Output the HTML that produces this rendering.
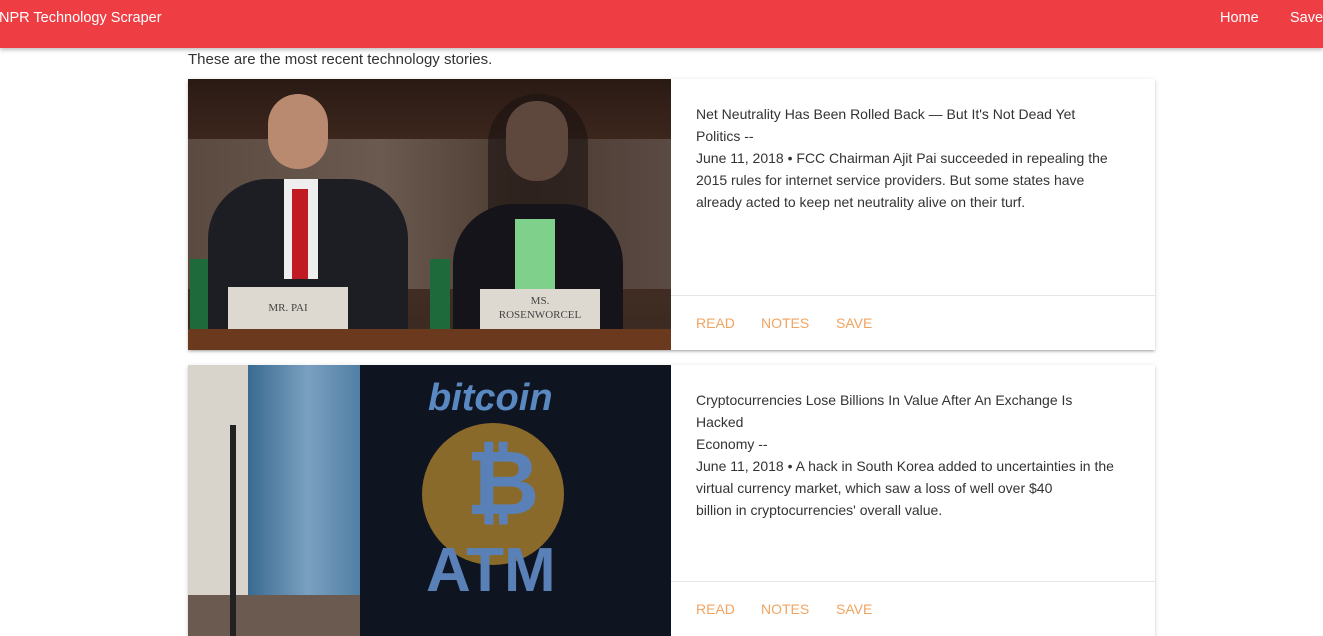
<!DOCTYPE html>
<html><head><style>
*{margin:0;padding:0;box-sizing:border-box}
body{width:1323px;height:596px;overflow:hidden;background:#fff;font-family:"Liberation Sans",sans-serif;color:rgba(0,0,0,.87);position:relative}
nav{position:absolute;left:0;top:0;width:1323px;height:48px;background:#ee3e43;box-shadow:0 2px 4px rgba(0,0,0,.25);color:#fff;font-size:14.5px}
nav .b{position:absolute;left:-1px;top:10px}
nav .h{position:absolute;left:1220px;top:10px}
nav .s{position:absolute;left:1290px;top:10px}
.intro{position:absolute;left:188px;top:51px;font-size:15px;color:#333}
.card{position:absolute;left:188px;width:967px;height:271px;background:#fff;box-shadow:0 2px 2px rgba(0,0,0,.14),0 1px 5px rgba(0,0,0,.12),0 3px 1px -2px rgba(0,0,0,.1)}
.img{position:absolute;left:0;top:0;width:483px;height:271px;overflow:hidden}
.txt{position:absolute;left:508px;top:24px;width:424px;font-size:14px;line-height:22px;color:#333}
.act{position:absolute;left:483px;top:216px;width:484px;height:55px;border-top:1px solid #e6e6e6}
.act span{position:absolute;top:19px;font-size:14px;color:#f0a461}
</style></head><body>
<nav><span class="b">NPR Technology Scraper</span><span class="h">Home</span><span class="s">Saved</span></nav>
<div class="intro">These are the most recent technology stories.</div>

<div class="card" style="top:79px">
<div class="img" style="background:linear-gradient(#2a1a14 0,#4a3024 40%,#3a2a22 100%)">
 <div style="position:absolute;left:0;top:60px;width:483px;height:150px;background:linear-gradient(90deg,#5a4a40,#6a5a50 40%,#4a3a30 70%,#5a4a44)"></div>
 <div style="position:absolute;left:80px;top:15px;width:60px;height:75px;border-radius:30px;background:#b98a70"></div>
 <div style="position:absolute;left:20px;top:100px;width:200px;height:171px;border-radius:60px 60px 0 0;background:#1d1d24"></div>
 <div style="position:absolute;left:96px;top:100px;width:34px;height:100px;background:#eee"></div>
 <div style="position:absolute;left:104px;top:110px;width:16px;height:90px;background:#c01a22"></div>
 <div style="position:absolute;left:318px;top:22px;width:62px;height:80px;border-radius:30px;background:#c49680"></div>
 <div style="position:absolute;left:300px;top:15px;width:100px;height:120px;border-radius:50px 50px 0 0;background:#1a1210;opacity:.6"></div>
 <div style="position:absolute;left:265px;top:125px;width:170px;height:146px;border-radius:60px 60px 0 0;background:#14141a"></div>
 <div style="position:absolute;left:327px;top:140px;width:40px;height:80px;background:#7fd08a"></div>
 <div style="position:absolute;left:0;top:250px;width:483px;height:21px;background:#6b3a1e"></div>
 <div style="position:absolute;left:40px;top:208px;width:120px;height:42px;background:#ddd8d0;font:11px 'Liberation Serif',serif;color:#444;text-align:center;line-height:42px">MR. PAI</div>
 <div style="position:absolute;left:292px;top:210px;width:120px;height:40px;background:#ddd8d0;font:11px 'Liberation Serif',serif;color:#444;text-align:center;line-height:14px;padding-top:5px">MS.<br>ROSENWORCEL</div>
 <div style="position:absolute;left:2px;top:180px;width:18px;height:70px;background:#1f6a3a"></div>
 <div style="position:absolute;left:242px;top:180px;width:20px;height:70px;background:#1f6a3a"></div>
</div>
<div class="txt">Net Neutrality Has Been Rolled Back — But It's Not Dead Yet<br>Politics --<br>June 11, 2018 • FCC Chairman Ajit Pai succeeded in repealing the 2015 rules for internet service providers. But some states have already acted to keep net neutrality alive on their turf.</div>
<div class="act"><span style="left:25px">READ</span><span style="left:90px">NOTES</span><span style="left:165px">SAVE</span></div>
</div>

<div class="card" style="top:365px">
<div class="img" style="background:#9ab0d0">
 <div style="position:absolute;left:0;top:0;width:60px;height:271px;background:#d8d4cc"></div>
 <div style="position:absolute;left:60px;top:0;width:120px;height:271px;background:linear-gradient(90deg,#3a6a90,#7aa0c0,#4a7aa0)"></div>
 <div style="position:absolute;left:172px;top:0;width:311px;height:271px;background:#0e1420"></div>
 <div style="position:absolute;left:240px;top:12px;font:bold 38px 'Liberation Sans',sans-serif;color:#5a88c0;font-style:italic">bitcoin</div>
 <div style="position:absolute;left:234px;top:58px;width:142px;height:142px;border-radius:50%;background:#8a6a2a"></div>
 <div style="position:absolute;left:278px;top:68px;font:bold 90px 'Liberation Sans',sans-serif;color:#5a80b8">₿</div>
 <div style="position:absolute;left:238px;top:170px;font:bold 62px 'Liberation Sans',sans-serif;color:#5a80b8">ATM</div>
 <div style="position:absolute;left:0;top:230px;width:172px;height:41px;background:#6a5a50"></div>
 <div style="position:absolute;left:42px;top:60px;width:6px;height:211px;background:#222"></div>
</div>
<div class="txt">Cryptocurrencies Lose Billions In Value After An Exchange Is<br>Hacked<br>Economy --<br>June 11, 2018 • A hack in South Korea added to uncertainties in the<br>virtual currency market, which saw a loss of well over $40<br>billion in cryptocurrencies' overall value.</div>
<div class="act"><span style="left:25px">READ</span><span style="left:90px">NOTES</span><span style="left:165px">SAVE</span></div>
</div>
</body></html>
